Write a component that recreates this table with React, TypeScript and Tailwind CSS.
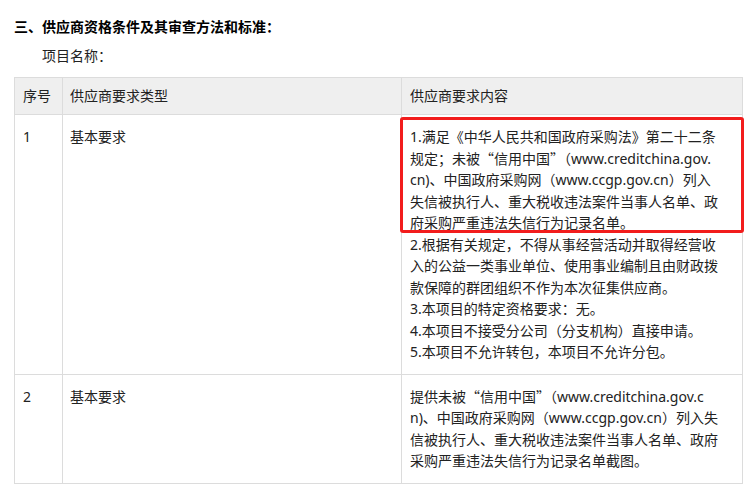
const rowOne = [
  ['1.满足《中华人民共和国政府采购法》第二十二条', '规定；未被“信用中国”（www.creditchina.gov.', 'cn)、中国政府采购网（www.ccgp.gov.cn）列入', '失信被执行人、重大税收违法案件当事人名单、政', '府采购严重违法失信行为记录名单。'],
  ['2.根据有关规定，不得从事经营活动并取得经营收', '入的公益一类事业单位、使用事业编制且由财政拨', '款保障的群团组织不作为本次征集供应商。', '3.本项目的特定资格要求：无。', '4.本项目不接受分公司（分支机构）直接申请。', '5.本项目不允许转包，本项目不允许分包。'],
];

const rowTwo = ['提供未被“信用中国”（www.creditchina.gov.c', 'n)、中国政府采购网（www.ccgp.gov.cn）列入失', '信被执行人、重大税收违法案件当事人名单、政府', '采购严重违法失信行为记录名单截图。'];

// curly quotes should take the full-width CJK glyphs
function Line({ text }: { text: string }) {
  return (
    <div className="whitespace-nowrap">
      {text.split(/([“”])/).map((part, i) =>
        part === '“' || part === '”' ? (
          <span key={i} className="font-['Noto_Sans_CJK_SC']">
            {part}
          </span>
        ) : (
          part
        ),
      )}
    </div>
  );
}

function Lines({ lines }: { lines: string[] }) {
  return (
    <>
      {lines.map((l) => (
        <Line key={l} text={l} />
      ))}
    </>
  );
}

export default function App() {
  return (
    <div
      className="w-[748px] h-[499px] bg-white text-[14px] leading-[21.5px] text-[#222] overflow-hidden"
      style={{ fontFamily: '"Noto Sans", "Noto Sans CJK SC", sans-serif' }}
    >
      <div className="pt-[16px] pl-[14px]">
        <p className="font-bold text-black leading-[21px]">三、供应商资格条件及其审查方法和标准：</p>
        <p className="mt-[8px] pl-[28px] leading-[21px]">项目名称：</p>
      </div>

      <table className="mt-[11px] ml-[14px] w-[728px] table-fixed border-collapse">
        <colgroup>
          <col className="w-[48px]" />
          <col className="w-[339px]" />
          <col className="w-[341px]" />
        </colgroup>
        <thead>
          <tr className="h-[37px] bg-[#efefef]">
            <th className="border border-[#dcdcdc] pl-[8px] text-left font-normal">序号</th>
            <th className="border border-[#dcdcdc] pl-[7px] text-left font-normal">供应商要求类型</th>
            <th className="border border-[#dcdcdc] pl-[8px] text-left font-normal">供应商要求内容</th>
          </tr>
        </thead>
        <tbody>
          <tr className="align-top">
            <td className="border border-[#dcdcdc] pl-[8px] pt-[11px]">1</td>
            <td className="border border-[#dcdcdc] pl-[7px] pt-[11px]">基本要求</td>
            <td className="relative border border-[#dcdcdc] pl-[8px] pt-[11px] pb-[11px]">
              <Lines lines={rowOne[0]} />
              <Lines lines={rowOne[1]} />
              <div className="pointer-events-none absolute left-[-2px] right-[-2px] top-[2px] h-[116px] rounded-[3px] border-[3px] border-[#f21c1c]" />
            </td>
          </tr>
          <tr className="align-top">
            <td className="border border-[#dcdcdc] pl-[8px] pt-[11px]">2</td>
            <td className="border border-[#dcdcdc] pl-[7px] pt-[11px]">基本要求</td>
            <td className="border border-[#dcdcdc] pl-[8px] pt-[11px] pb-[11px]">
              <Lines lines={rowTwo} />
            </td>
          </tr>
        </tbody>
      </table>
    </div>
  );
}
